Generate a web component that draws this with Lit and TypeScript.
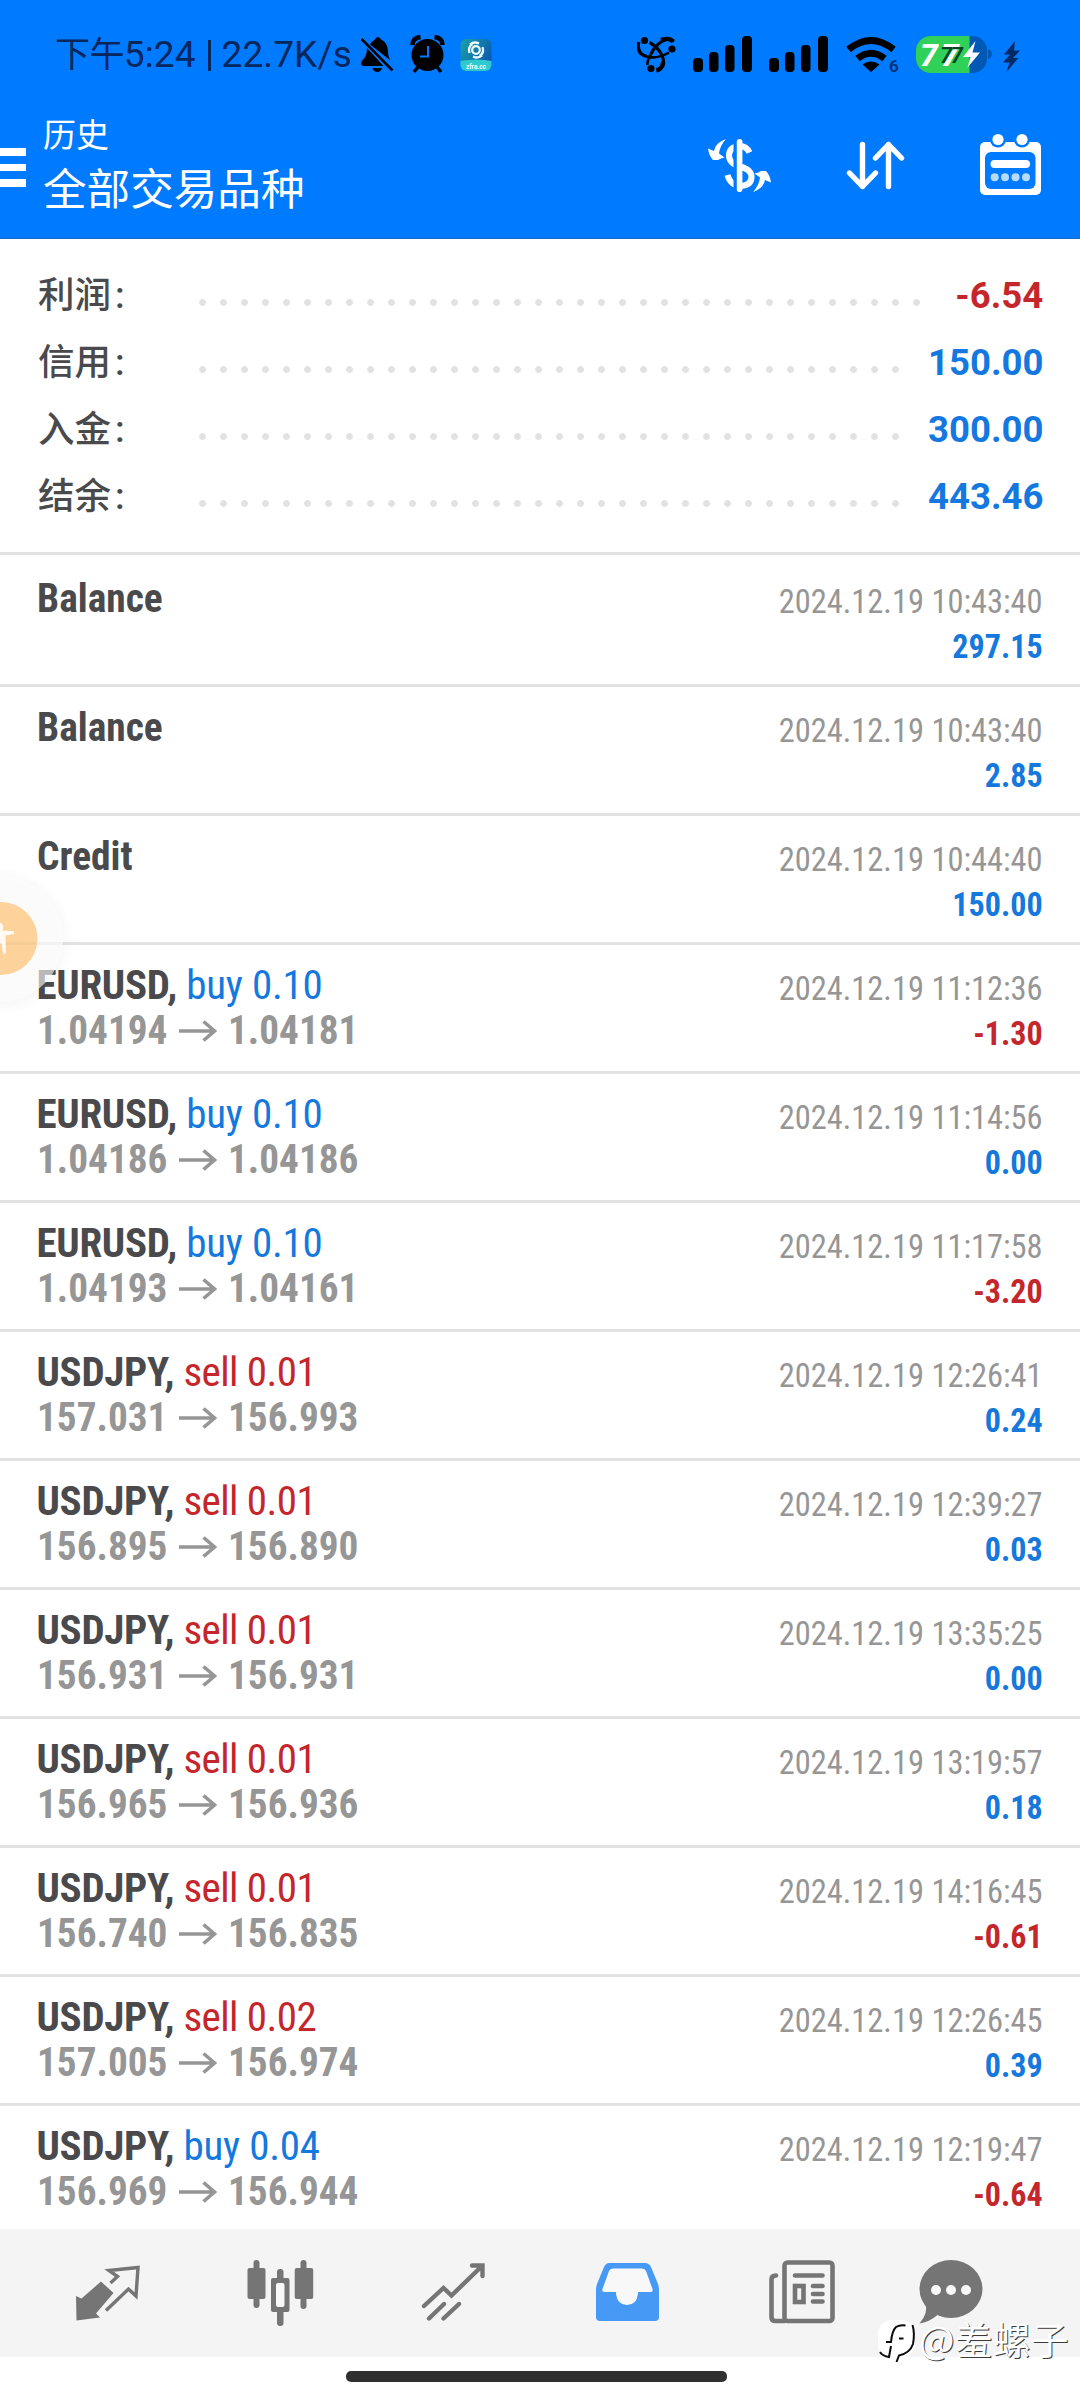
import { LitElement, html, css, svg, nothing } from "lit";
import { customElement, property } from "lit/decorators.js";
import { classMap } from "lit/directives/class-map.js";

type Deal = {
  name: string;
  side?: "buy" | "sell";
  lot?: string;
  from?: string;
  to?: string;
  time: string;
  value: string;
};

const SUMMARY = [
  { label: "利润", value: "-6.54", dots: 35 },
  { label: "信用", value: "150.00", dots: 34 },
  { label: "入金", value: "300.00", dots: 34 },
  { label: "结余", value: "443.46", dots: 34 },
];

const DEALS: Deal[] = [
  { name: "Balance", time: "10:43:40", value: "297.15" },
  { name: "Balance", time: "10:43:40", value: "2.85" },
  { name: "Credit", time: "10:44:40", value: "150.00" },
  { name: "EURUSD", side: "buy", lot: "0.10", from: "1.04194", to: "1.04181", time: "11:12:36", value: "-1.30" },
  { name: "EURUSD", side: "buy", lot: "0.10", from: "1.04186", to: "1.04186", time: "11:14:56", value: "0.00" },
  { name: "EURUSD", side: "buy", lot: "0.10", from: "1.04193", to: "1.04161", time: "11:17:58", value: "-3.20" },
  { name: "USDJPY", side: "sell", lot: "0.01", from: "157.031", to: "156.993", time: "12:26:41", value: "0.24" },
  { name: "USDJPY", side: "sell", lot: "0.01", from: "156.895", to: "156.890", time: "12:39:27", value: "0.03" },
  { name: "USDJPY", side: "sell", lot: "0.01", from: "156.931", to: "156.931", time: "13:35:25", value: "0.00" },
  { name: "USDJPY", side: "sell", lot: "0.01", from: "156.965", to: "156.936", time: "13:19:57", value: "0.18" },
  { name: "USDJPY", side: "sell", lot: "0.01", from: "156.740", to: "156.835", time: "14:16:45", value: "-0.61" },
  { name: "USDJPY", side: "sell", lot: "0.02", from: "157.005", to: "156.974", time: "12:26:45", value: "0.39" },
  { name: "USDJPY", side: "buy", lot: "0.04", from: "156.969", to: "156.944", time: "12:19:47", value: "-0.64" },
];

@customElement("status-bar")
class StatusBar extends LitElement {
  static styles = css`
    :host { display: flex; height: 100px; align-items: flex-start; padding-top: 34px; box-sizing: border-box; }
    .clock {
      margin: 1px 0 0 55px; width: 306px; height: 40px; white-space: nowrap;
      font: 400 37px/40px Roboto, "Noto Sans CJK SC", sans-serif; color: #06265c; letter-spacing: 0.1px;
    }
    .cjk { font-size: 35px; letter-spacing: -0.6px; }
    .clock i { display: inline-block; width: 3px; height: 31px; background: #06265c; margin: 0 11px 0 12px; vertical-align: -4px; }
    .left { display: block; }
    .right { display: block; margin-left: 144px; }
    text { font-family: Roboto, sans-serif; }
  `;

  render() {
    const bars = (x: number) => svg`
      <rect x=${x} y="58" width="10" height="14" rx="4"/>
      <rect x=${x + 16} y="52" width="9.5" height="20" rx="4"/>
      <rect x=${x + 32} y="45" width="9.5" height="27" rx="4"/>
      <rect x=${x + 49} y="36" width="10" height="36" rx="4"/>`;
    return html`
      <div class="clock"><span class="cjk">下午</span>5:24<i></i>22.7K/s</div>
      <svg class="left" width="132" height="40" viewBox="361 34 132 40">
        <path d="M364 66q-3 0-3-3 0-2 3-4.500 3-4 3-10.500L383.500 66z"/>
        <path d="M370 44.500q2-3.500 5-5 1-2.500 3-2.500t3 2.500q6.500 3 7 11.500 0 6 2.500 9.500z"/>
        <path d="M372.500 68h9.500q-1 4-4.700 4t-4.800-4z"/>
        <path d="M361.500 39L392.500 70.500" stroke="#000" stroke-width="2.600"/>
        <circle cx="427.500" cy="55" r="16"/>
        <path d="M412.500 45q0-7 8-8M434.500 37q8 1 8 8" fill="none" stroke="#000" stroke-width="4.500"/>
        <path d="M418 67l-4 5M437 67l4 5" stroke="#000" stroke-width="3.500"/>
        <path d="M428 46v10.500h-8" fill="none" stroke="#007aff" stroke-width="2"/>
        <defs>
          <linearGradient id="g" x1="0" x2="1" y1="0" y2="0.600">
            <stop offset="0" stop-color="#1ba3a8"/><stop offset="1" stop-color="#0c57b0"/>
          </linearGradient>
          <clipPath id="c"><rect x="460.500" y="39" width="31" height="32" rx="6"/></clipPath>
        </defs>
        <g clip-path="url(#c)">
          <rect x="460" y="39" width="32" height="33" fill="url(#g)"/>
          <path d="M460 61q16-3 32 0v11h-32z" fill="#2fc9cf"/>
        </g>
        <g fill="none" stroke="#eafcff" stroke-width="2.300">
          <circle cx="476" cy="50" r="3.800"/>
          <path d="M469.500 53q-2-6 3-9M482.500 47q2 6-3 9M473 56.500q5 2.500 9-1M479 43.500q-5-2.500-9 1"/>
        </g>
        <text x="466" y="69" font-size="8" font-weight="700" fill="#eaffff" textLength="20" lengthAdjust="spacingAndGlyphs">zfra.cc</text>
      </svg>
      <svg class="right" width="384" height="40" viewBox="637 34 384 40">
        <circle cx="644.500" cy="40.500" r="3.600"/><circle cx="672" cy="49" r="3.600"/><circle cx="651" cy="68.500" r="3.600"/>
        <g fill="none" stroke="#000" stroke-width="3.200">
          <path d="M638.800 42q-2.500 12 8 14.500M649.500 42.500q7 3.500 11.500 11 4 8 2 12-2.500 5-6.500 5.500M651 54Q655 46 661 42q6-4.500 13-1" />
          <path d="M646 56.500q11 3 23-4M651 54q-4 6-3.500 11" stroke-width="2.600"/>
          <path d="M661 40q9-3 12 2" stroke-width="4"/>
          <path d="M656.500 70q6-1 6.500-8" stroke-width="4"/>
        </g>
        ${bars(693)} ${bars(769)}
        <g fill="none" stroke="#000" stroke-width="7">
          <path d="M848.500 49.500Q871 31.500 893.500 49.500"/><path d="M857.500 58.500Q871 48 884.500 58.500"/>
        </g>
        <path d="M862.500 64.500q8.500-6 17 0L871 72z"/>
        <text x="889" y="71.500" font-size="17" font-weight="700" fill="#003579">6</text>
        <defs><clipPath id="b"><rect x="916" y="36" width="71" height="37" rx="14.500"/></clipPath></defs>
        <g clip-path="url(#b)">
          <rect x="916" y="36" width="71" height="37" fill="#0059b5"/>
          <rect x="916" y="36" width="53.500" height="37" fill="#30d158"/>
        </g>
        <path d="M988 49q4 1.500 4 5t-4 5z" fill="#0059b5"/>
        <text x="920" y="66" font-size="32" font-weight="800" font-style="italic" fill="#fff" textLength="39">77</text>
        <text x="940" y="62.500" font-size="22" font-weight="600" font-style="italic" fill="#0b4422" textLength="23">77</text>
        <path d="M975.500 41L963 57h7.500l-3 10.500L980 52.500h-7.500z" fill="#fff"/>
        <path d="M1015 41l-11 13.500h6l-7 8h6.500l-3 9.500 12-14h-5.500l7-7.500h-6z" fill="#042a66"/>
      </svg>`;
  }
}

@customElement("app-header")
class AppHeader extends LitElement {
  static styles = css`
    :host { display: block; height: 239px; box-sizing: border-box; background: #007aff; border-bottom: 1px solid #1468bd; }
    .bar { display: flex; align-items: flex-start; height: 130px; }
    .menu { display: flex; flex-direction: column; gap: 8px; width: 26px; padding-top: 48px; }
    .menu b { height: 7.500px; background: #fff; }
    .titles { margin: 8px 0 0 17px; width: 647px; color: #fff; font-family: "Noto Sans CJK SC", sans-serif; }
    .small { font-size: 33px; line-height: 50px; }
    .big { font-size: 43.600px; line-height: 56px; }
    svg { display: block; margin-left: 18px; margin-top: 30px; }
  `;

  render() {
    return html`
      <status-bar></status-bar>
      <div class="bar">
        <div class="menu"><b></b><b></b><b></b></div>
        <div class="titles">
          <div class="small">历史</div>
          <div class="big">全部交易品种</div>
        </div>
        <svg width="334" height="70" viewBox="708 130 334 70">
          <path d="M749.500 152.500q-3-6.500-10-6.500-10.500 1-10.500 9.500 0 8 11 11 11.500 3 11.500 10.500 0 8.500-11.500 9-9.500-.5-12.500-11" fill="none" stroke="#fff" stroke-width="6"/>
          <rect x="733.500" y="138" width="4" height="56" fill="#007aff"/>
          <rect x="736.800" y="139" width="5.600" height="53" rx="2.800" fill="#fff"/>
          <path d="M726 139q-10.500 3.500-12 12l-6-2.500q1 7.500 5 11.500h5q3-2 6.500-2.500l-5.500-4q1-8 7-14.500z" fill="#fff"/>
          <path transform="rotate(180 739.500 165.500)" d="M726 139q-10.500 3.500-12 12l-6-2.500q1 7.500 5 11.500h5q3-2 6.500-2.500l-5.500-4q1-8 7-14.500z" fill="#fff"/>
          <path d="M862.500 144.500v42M849.500 173l13 13.500 13-13.500M888.500 186.500v-42M875.500 158l13-13.500 13 13.500" fill="none" stroke="#fff" stroke-width="5.400" stroke-linecap="round" stroke-linejoin="round"/>
          <rect x="980" y="142" width="61" height="53" rx="5" fill="#fff"/>
          <circle cx="998" cy="139.500" r="8" fill="#007aff"/><circle cx="1022" cy="139.500" r="8" fill="#007aff"/>
          <circle cx="998" cy="139.500" r="5.600" fill="#fff"/><circle cx="1022" cy="139.500" r="5.600" fill="#fff"/>
          <rect x="985" y="152" width="50.500" height="37" rx="6" fill="#007aff"/>
          <rect x="990.500" y="160" width="39.500" height="8" rx="4" fill="#fff"/>
          <g fill="#b5dcff"><circle cx="994.700" cy="177.300" r="4"/><circle cx="1005" cy="177.300" r="4"/><circle cx="1015.500" cy="177.300" r="4"/><circle cx="1026" cy="177.300" r="4"/></g>
        </svg>
      </div>`;
  }
}

@customElement("account-summary")
class AccountSummary extends LitElement {
  static styles = css`
    :host { display: block; height: 316px; box-sizing: border-box; padding: 23px 37px 0 38px; border-bottom: 3px solid #e2e2e2; background: #fff; }
    .line { display: flex; height: 67px; line-height: 67px; align-items: baseline; }
    .label { width: 154px; font: 500 36.500px/67px Roboto, "Noto Sans CJK SC", sans-serif; color: #4a4a4c; white-space: nowrap; }
    .label span { margin-left: 4px; }
    .dots { align-self: flex-start; height: 7px; margin-top: 37px; background: radial-gradient(circle at center, #e2e2e2 3px, transparent 3.800px) 0 0 / 21px 7px repeat-x; }
    .value { margin-left: auto; font: 700 37.500px/67px Roboto, sans-serif; color: #1478e0; transform: scaleX(0.975); transform-origin: right; }
    .neg { color: #c4262b; }
  `;

  render() {
    return SUMMARY.map(
      (s) => html`<div class="line">
        <div class="label">${s.label}<span>:</span></div>
        <div class="dots" style="width:${s.dots * 21}px"></div>
        <div class=${classMap({ value: true, neg: s.value.startsWith("-") })}>${s.value}</div>
      </div>`
    );
  }
}

@customElement("deal-row")
class DealRow extends LitElement {
  @property({ attribute: false }) deal!: Deal;

  static styles = css`
    :host { display: flex; justify-content: space-between; height: 126px; box-sizing: border-box; padding: 0 37px 0 36.500px;
      font-family: "Roboto Condensed", Roboto, sans-serif; white-space: nowrap; }
    .main { padding-top: 18px; }
    .side { padding-top: 20.500px; text-align: right; }
    .title { font-size: 41px; line-height: 45px; color: #4a4a4c; font-weight: 400; letter-spacing: -0.2px; }
    .title b { font-weight: 700; letter-spacing: -0.3px; }
    .title b.plain { display: inline-block; letter-spacing: 0; transform: scaleX(0.962); transform-origin: left; }
    .buy { color: #1478dc; }
    .sell { color: #c4262b; letter-spacing: -0.55px; }
    .prices { display: flex; align-items: center; font-size: 41px; line-height: 45px; height: 45px; font-weight: 700; color: #969696; }
    .prices span { transform: scaleX(0.957); transform-origin: left; }
    .from { width: 142px; }
    .prices svg { display: block; width: 38px; height: 22px; margin: 0 11px 0 0; }
    .time, .value { font-size: 34px; line-height: 45px; transform-origin: right; }
    .time { color: #969696; transform: scaleX(0.954); }
    .value { font-weight: 700; color: #1478dc; transform: scaleX(0.942); }
    .value.neg { color: #c4262b; }
  `;

  render() {
    const d = this.deal;
    return html`
      <div class="main">
        <div class="title">
          ${d.side
            ? html`<b>${d.name},</b> <span class=${d.side}>${d.side} ${d.lot}</span>`
            : html`<b class="plain">${d.name}</b>`}
        </div>
        ${d.from
          ? html`<div class="prices">
              <span class="from">${d.from}</span>
              <svg viewBox="0 0 38 22"><path d="M0 11h35M24.500 1.500L35.500 11l-11 9.500" fill="none" stroke="#969696" stroke-width="3.600"/></svg>
              <span>${d.to}</span>
            </div>`
          : nothing}
      </div>
      <div class="side">
        <div class="time">2024.12.19 ${d.time}</div>
        <div class=${classMap({ value: true, neg: d.value.startsWith("-") })}>${d.value}</div>
      </div>`;
  }
}

@customElement("bottom-nav")
class BottomNav extends LitElement {
  static styles = css`
    :host { display: grid; grid-template-columns: 173px 173px 174px 174px 149px 100px; height: 128px; box-sizing: border-box;
      padding: 27px 0 0 72px; background: #f4f4f4; }
    svg { display: block; width: 72px; height: 72px; color: #757575; }
  `;

  render() {
    return html`
      <svg viewBox="72 2256 72 72">
        <path d="M76 2296l5.500 2.500 19.500-17 12.500 11.500-17.500 20.500 4 4-23.500 3z" fill="currentColor"/>
        <path d="M110.500 2283l7-6.500-8.500-6 29-3-2 28.500-7.500-7-22.500 21.500" fill="none" stroke="currentColor" stroke-width="3.400"/>
      </svg>
      <svg viewBox="245 2256 72 72" fill="currentColor">
        <rect x="247.500" y="2268" width="18" height="31" rx="2"/><rect x="253.500" y="2260" width="6" height="48" rx="3"/>
        <rect x="271" y="2278" width="18.500" height="34" rx="2"/><rect x="277" y="2269" width="6.500" height="57" rx="3"/>
        <rect x="276" y="2283" width="8.500" height="24" rx="2" fill="#f8f8f8"/>
        <rect x="294.700" y="2268" width="18.500" height="31" rx="2"/><rect x="300.500" y="2260" width="6" height="49" rx="3"/>
      </svg>
      <svg viewBox="418 2256 72 72" fill="none" stroke="currentColor" stroke-width="4.400" stroke-linecap="round">
        <path d="M424 2306l19.500-18 8 7.500 30-29M472 2265.500h10.500v10.500M429 2318.500l15-14.500M443.500 2318.500l15.500-14.500" stroke-linejoin="miter"/>
      </svg>
      <svg viewBox="592 2256 72 72">
        <path d="M609 2263h36q4 0 6 4l7 17q1 3 1 6v27q0 4-4 4h-55q-4 0-4-4v-27q0-3 1-6l7-17q2-4 5-4z" fill="#469af6"/>
        <path d="M613 2268.500h29q3 0 4 2.500l6.500 18q.8 3-1.500 3h-13v2q-1.500 11-11 11t-11-11v-2h-11.500q-3 0-2-3l6.500-18q1-2.500 4-2.500z" fill="#f8f8f8"/>
      </svg>
      <svg viewBox="766 2256 72 72" fill="none" stroke="currentColor" stroke-width="4.600" stroke-linecap="round">
        <rect x="784.500" y="2262.500" width="48" height="58.500" rx="3"/>
        <path d="M776 2275.500q-4.500 0-4.500 4v37.500q0 4 4 4h9"/>
        <path d="M795 2275.500h27.500"/>
        <rect x="795" y="2286" width="8.500" height="16"/>
        <path d="M813 2286h9.500M813 2294h9.500M813 2301.500h9.500"/>
      </svg>
      <svg viewBox="915 2256 72 72">
        <ellipse cx="951" cy="2289" rx="31.500" ry="29" fill="currentColor"/>
        <path d="M925 2303q4 9-5.500 20.500 9-1 18-8.500z" fill="currentColor"/>
        <g fill="#f8f8f8"><circle cx="936" cy="2290" r="5"/><circle cx="951" cy="2290" r="5"/><circle cx="966" cy="2290" r="5"/></g>
      </svg>`;
  }
}

@customElement("app-root")
class AppRoot extends LitElement {
  static styles = css`
    :host { display: flex; flex-direction: column; position: relative; width: 1080px; height: 2400px; overflow: hidden; background: #fff; }
    .list { height: 1674px; display: flex; flex-direction: column; }
    deal-row { flex: none; border-bottom: 3px solid #e2e2e2; box-sizing: content-box; }
    deal-row:first-child { padding-top: 3px; }
    deal-row:last-child { border-bottom: none; }
    bottom-nav { flex: none; }
    .home { height: 43px; display: flex; justify-content: center; padding-top: 14px; box-sizing: border-box; }
    .home i { width: 381px; height: 10.500px; border-radius: 5px; background: #303030; margin-right: 8px; }
    .floating { position: absolute; left: 0; top: 866px; }
    .mark { position: absolute; left: 876px; top: 2314px; display: flex; align-items: flex-start; }
    .mark svg { margin-top: 3px; }
    .mark span { font: 400 37.500px/48px "Noto Sans CJK SC", sans-serif; color: #fff; text-shadow: 1px 1px 0 #3a3a3a; margin-left: 1px; letter-spacing: 0.5px; white-space: nowrap; }
  `;

  render() {
    return html`
      <app-header></app-header>
      <account-summary></account-summary>
      <div class="list">${DEALS.map((d) => html`<deal-row .deal=${d}></deal-row>`)}</div>
      <bottom-nav></bottom-nav>
      <div class="home"><i></i></div>
      <svg class="floating" width="80" height="150" viewBox="0 866 80 150">
        <defs>
          <radialGradient id="halo">
            <stop offset="0.820" stop-color="#000" stop-opacity="0.028"/>
            <stop offset="1" stop-color="#000" stop-opacity="0"/>
          </radialGradient>
        </defs>
        <circle cx="0" cy="941" r="74" fill="url(#halo)"/>
        <circle cx="0" cy="939" r="63" fill="#fdfdfd" fill-opacity="0.620"/>
        <circle cx="1" cy="938.500" r="36.500" fill="#fed39b"/>
        <path d="M0 943.500h36" stroke="#f3cb95" stroke-width="2.500"/>
        <path d="M0 922.500q3.200 1 3.200 4.500 0 1.800-1 3.500l11.800.8v2.700l-8.500 1.500.5 17q-1.500 3-3 0l-1.500-9H0z" fill="#fffaf2"/>
      </svg>
      <div class="mark">
        <svg width="42" height="48" viewBox="876 2318 42 48">
          <rect x="878" y="2321" width="37" height="38" rx="14" fill="#fff"/>
          <g fill="none" stroke="#0c0c0c" stroke-width="2">
            <path d="M886 2343h5q1-11 5-15 4-2.500 9.500-1.500M899 2339.500h4.500M880 2353q2.500 4 9 5l2-11M912.500 2326q2.500 8 .5 19-3 9-14 11.500l-2.500 6.500"/>
          </g>
        </svg>
        <span>@羞螺子</span>
      </div>`;
  }
}
